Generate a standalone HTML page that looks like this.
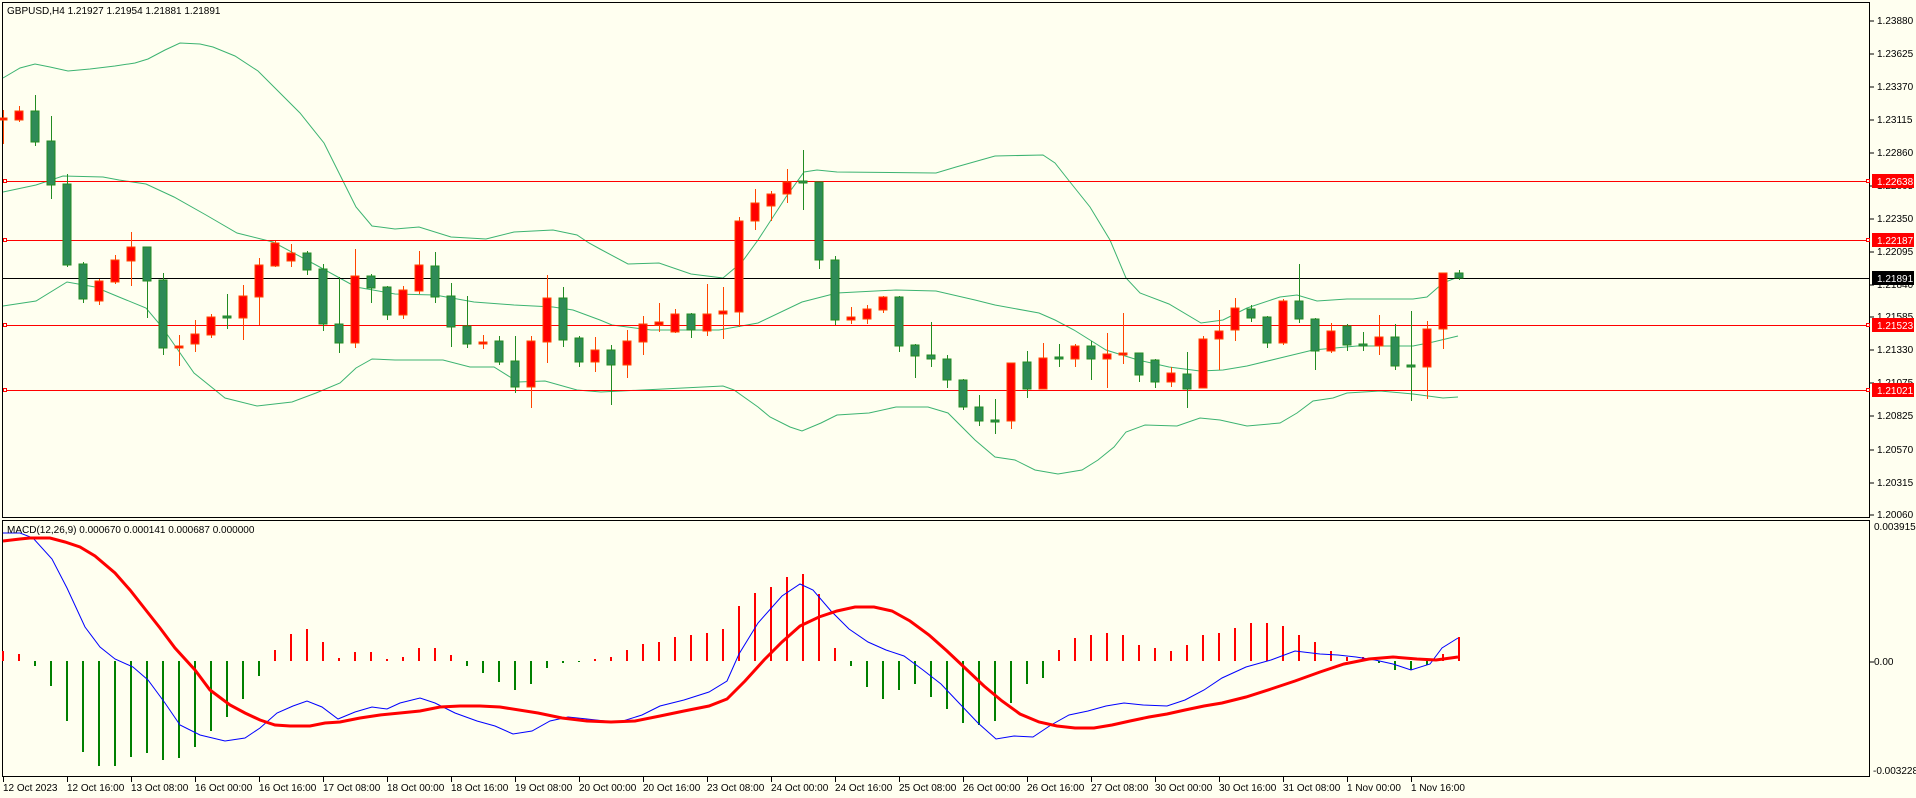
<!DOCTYPE html>
<html><head><meta charset="utf-8"><style>
html,body{margin:0;padding:0;background:#FFFFF0;}
svg{display:block;}
text{font-family:"Liberation Sans",sans-serif;font-size:10px;fill:#000;}
</style></head><body>
<svg width="1916" height="798" viewBox="0 0 1916 798" xmlns="http://www.w3.org/2000/svg">
<rect x="0" y="0" width="1916" height="798" fill="#FFFFF0"/>
<g fill="none" stroke="#000" stroke-width="1" shape-rendering="crispEdges">
<rect x="2.5" y="2.5" width="1867" height="515"/>
<rect x="2.5" y="520.5" width="1867" height="256"/>
</g>
<g fill="none" stroke="#3CB371" stroke-width="1">
<polyline points="3,78 20,68 35,64 50,67 68,71 90,69 115,66 135,63 148,59 165,50 180,43 200,44 213,47 235,56 258,71 277,90 300,113 324,143 344,183 356,207 372,226 395,229 419,227 451,237 486,239 514,232 553,230 577,235 589,243 600,249 628,264 659,263 691,274 723,278 742,262 758,240 786,197 804,172 817,170 837,172 936,173 956,167 995,156 1043,155 1055,163 1070,182 1090,207 1110,240 1126,278 1140,293 1169,304 1201,323 1223,320 1247,308 1280,297 1297,295 1317,301 1347,299 1413,299 1427,297 1443,283 1458,277"/>
<polyline points="3,192 36,185 63,176 103,177 119,180 146,184 174,197 206,215 237,233 273,242 316,265 356,287 395,294 435,295 474,302 514,305 553,307 573,310 600,320 612,325 651,330 719,330 758,323 802,302 837,293 896,290 936,291 975,300 995,305 1039,313 1055,320 1074,330 1106,350 1138,360 1169,367 1200,371 1223,370 1247,366 1280,358 1313,350 1357,346 1413,346 1433,342 1458,336"/>
<polyline points="3,306 36,301 67,282 95,287 119,297 146,308 162,327 194,373 225,398 257,406 292,402 316,393 340,383 356,368 372,359 395,360 443,360 470,367 494,367 510,377 518,382 545,381 577,390 601,392 663,389 723,386 734,390 758,407 770,417 790,427 802,431 821,423 837,415 869,413 896,407 928,407 948,413 975,440 995,457 1015,460 1035,470 1058,474 1082,470 1098,460 1114,447 1126,432 1145,425 1177,426 1200,418 1220,420 1247,426 1280,423 1297,413 1313,401 1333,398 1347,393 1380,391 1413,394 1443,398 1458,397"/>
</g>
<g stroke-width="1" shape-rendering="crispEdges">
<line x1="3" y1="181.5" x2="1869" y2="181.5" stroke="#FF0000"/>
<line x1="3" y1="240.5" x2="1869" y2="240.5" stroke="#FF0000"/>
<line x1="3" y1="325.5" x2="1869" y2="325.5" stroke="#FF0000"/>
<line x1="3" y1="390.5" x2="1869" y2="390.5" stroke="#FF0000"/>
<line x1="3" y1="278.5" x2="1869" y2="278.5" stroke="#000"/>
</g>
<g fill="#FFFFF0" stroke="#FF0000" stroke-width="1" shape-rendering="crispEdges">
<rect x="3.5" y="179.5" width="3" height="3"/><rect x="3.5" y="238.5" width="3" height="3"/><rect x="3.5" y="323.5" width="3" height="3"/><rect x="3.5" y="388.5" width="3" height="3"/>
<rect x="1866.5" y="179.5" width="3" height="3"/><rect x="1866.5" y="238.5" width="3" height="3"/><rect x="1866.5" y="323.5" width="3" height="3"/><rect x="1866.5" y="388.5" width="3" height="3"/>
</g>
<g transform="translate(0.5,0)" stroke-width="1" shape-rendering="crispEdges">
<path stroke="#228B22" d="M35 95V146M51 116V199M67 174V267M83 262V303M147 247V318M163 273V355M227 294V329M307 251V275M323 264V331M339 277V353M371 274V303M387 286V320M435 252V303M451 283V347M467 296V348M499 336V365M515 336V393M563 287V347M579 336V367M611 345V405M691 313V338M803 150V210M819 182V269M835 256V325M899 296V352M915 344V378M931 322V367M947 355V388M963 379V410M979 395V426M995 399V434M1027 351V398M1059 344V367M1091 341V380M1139 353V382M1155 359V388M1187 352V408M1251 305V322M1267 316V348M1299 264V323M1315 318V370M1347 324V351M1363 332V351M1395 324V370M1411 311V401M1459 270V280"/>
<path stroke="#FF4500" d="M3 110V144M19 106V122M99 279V305M115 255V284M131 232V286M179 335V366M195 320V352M211 314V338M243 285V340M259 258V325M275 241V267M291 244V267M355 249V348M403 286V319M419 251V294M483 335V349M531 336V408M547 275V363M595 337V372M627 330V378M643 316V355M659 303V332M675 309V333M707 284V336M723 287V339M739 217V327M755 189V230M771 191V221M787 169V203M851 307V324M867 305V324M883 296V313M1011 363V429M1043 343V389M1075 344V367M1107 333V388M1123 313V364M1171 367V387M1203 336V388M1219 310V370M1235 298V341M1283 299V345M1331 323V353M1379 315V355M1427 321V399M1443 273V349"/>
</g>
<g fill="#2E8B57" stroke="#228B22" stroke-width="1" shape-rendering="crispEdges">
<rect x="31" y="111" width="8" height="31"/><rect x="47" y="141" width="8" height="44"/><rect x="63" y="184" width="8" height="81"/><rect x="79" y="264" width="8" height="35"/><rect x="143" y="247" width="8" height="34"/><rect x="159" y="280" width="8" height="68"/><rect x="223" y="316" width="8" height="2"/><rect x="303" y="253" width="8" height="17"/><rect x="319" y="269" width="8" height="55"/><rect x="335" y="324" width="8" height="19"/><rect x="367" y="276" width="8" height="12"/><rect x="383" y="287" width="8" height="28"/><rect x="431" y="266" width="8" height="31"/><rect x="447" y="296" width="8" height="31"/><rect x="463" y="326" width="8" height="18"/><rect x="495" y="341" width="8" height="21"/><rect x="511" y="361" width="8" height="26"/><rect x="559" y="298" width="8" height="42"/><rect x="575" y="338" width="8" height="24"/><rect x="607" y="350" width="8" height="15"/><rect x="687" y="314" width="8" height="16"/><rect x="799" y="181" width="8" height="2"/><rect x="815" y="182" width="8" height="78"/><rect x="831" y="260" width="8" height="60"/><rect x="895" y="297" width="8" height="49"/><rect x="911" y="345" width="8" height="11"/><rect x="927" y="355" width="8" height="4"/><rect x="943" y="359" width="8" height="21"/><rect x="959" y="380" width="8" height="27"/><rect x="975" y="407" width="8" height="14"/><rect x="991" y="420" width="8" height="2"/><rect x="1023" y="362" width="8" height="27"/><rect x="1055" y="357" width="8" height="2"/><rect x="1087" y="346" width="8" height="13"/><rect x="1135" y="353" width="8" height="22"/><rect x="1151" y="360" width="8" height="22"/><rect x="1183" y="374" width="8" height="15"/><rect x="1247" y="309" width="8" height="9"/><rect x="1263" y="317" width="8" height="26"/><rect x="1295" y="301" width="8" height="18"/><rect x="1311" y="319" width="8" height="32"/><rect x="1343" y="326" width="8" height="19"/><rect x="1359" y="344" width="8" height="2"/><rect x="1391" y="337" width="8" height="29"/><rect x="1407" y="365" width="8" height="2"/><rect x="1455" y="273" width="8" height="5"/>
</g>
<g fill="#FF0000" stroke="#FF4500" stroke-width="1" shape-rendering="crispEdges">
<rect x="-1" y="118" width="8" height="2"/><rect x="15" y="111" width="8" height="9"/><rect x="95" y="281" width="8" height="20"/><rect x="111" y="260" width="8" height="22"/><rect x="127" y="247" width="8" height="14"/><rect x="175" y="346" width="8" height="2"/><rect x="191" y="334" width="8" height="10"/><rect x="207" y="317" width="8" height="18"/><rect x="239" y="296" width="8" height="22"/><rect x="255" y="265" width="8" height="32"/><rect x="271" y="243" width="8" height="23"/><rect x="287" y="253" width="8" height="8"/><rect x="351" y="276" width="8" height="67"/><rect x="399" y="290" width="8" height="25"/><rect x="415" y="265" width="8" height="26"/><rect x="479" y="342" width="8" height="2"/><rect x="527" y="341" width="8" height="46"/><rect x="543" y="298" width="8" height="44"/><rect x="591" y="350" width="8" height="12"/><rect x="623" y="341" width="8" height="24"/><rect x="639" y="324" width="8" height="18"/><rect x="655" y="322" width="8" height="3"/><rect x="671" y="314" width="8" height="18"/><rect x="703" y="314" width="8" height="17"/><rect x="719" y="311" width="8" height="3"/><rect x="735" y="221" width="8" height="91"/><rect x="751" y="203" width="8" height="18"/><rect x="767" y="194" width="8" height="12"/><rect x="783" y="182" width="8" height="12"/><rect x="847" y="317" width="8" height="3"/><rect x="863" y="309" width="8" height="10"/><rect x="879" y="297" width="8" height="13"/><rect x="1007" y="363" width="8" height="58"/><rect x="1039" y="358" width="8" height="31"/><rect x="1071" y="346" width="8" height="13"/><rect x="1103" y="354" width="8" height="5"/><rect x="1119" y="353" width="8" height="2"/><rect x="1167" y="373" width="8" height="9"/><rect x="1199" y="339" width="8" height="49"/><rect x="1215" y="331" width="8" height="8"/><rect x="1231" y="308" width="8" height="22"/><rect x="1279" y="301" width="8" height="42"/><rect x="1327" y="331" width="8" height="20"/><rect x="1375" y="337" width="8" height="9"/><rect x="1423" y="329" width="8" height="38"/><rect x="1439" y="273" width="8" height="56"/>
</g>
<g stroke-width="2" shape-rendering="crispEdges">
<path stroke="#FF0000" d="M3 661V651M19 661V654M275 661V650M291 661V634M307 661V629M323 661V642M339 661V658M355 661V652M371 661V652M387 661V659M403 661V657M419 661V648M435 661V648M451 661V655M595 661V659M611 661V657M627 661V650M643 661V644M659 661V642M675 661V637M691 661V635M707 661V633M723 661V629M739 661V606M755 661V593M771 661V587M787 661V577M803 661V574M819 661V594M835 661V648M1059 661V650M1075 661V638M1091 661V635M1107 661V633M1123 661V635M1139 661V645M1155 661V648M1171 661V651M1187 661V645M1203 661V635M1219 661V633M1235 661V628M1251 661V623M1267 661V623M1283 661V626M1299 661V635M1315 661V642M1331 661V651M1347 661V657M1363 661V657M1443 661V654M1459 661V637"/>
<path stroke="#008000" d="M35 661V666M51 661V686M67 661V721M83 661V752M99 661V766M115 661V766M131 661V757M147 661V753M163 661V760M179 661V758M195 661V747M211 661V731M227 661V717M243 661V699M259 661V676M467 661V666M483 661V673M499 661V682M515 661V690M531 661V684M547 661V668M563 661V663M579 661V662M851 661V666M867 661V687M883 661V699M899 661V690M915 661V684M931 661V697M947 661V709M963 661V723M979 661V725M995 661V721M1011 661V703M1027 661V684M1043 661V678M1379 661V663M1395 661V670M1411 661V670M1427 661V665"/>
</g>
<polyline fill="none" stroke="#0000FF" stroke-width="1" points="3,533 20,533 33,538 52,559 67,588 85,627 100,647 115,659 133,667 148,680 165,703 180,725 200,735 225,741 245,738 260,728 277,713 293,706 307,701 322,707 338,719 355,712 372,707 387,709 400,703 420,698 435,703 455,713 477,721 495,726 513,734 532,731 550,721 568,717 587,719 605,721 623,721 642,715 660,706 684,700 709,692 727,681 739,654 758,623 782,596 800,584 813,590 831,611 849,629 868,642 886,650 904,656 923,670 941,684 959,703 978,723 996,739 1014,736 1033,737 1051,725 1069,715 1088,711 1106,706 1124,703 1143,705 1167,706 1185,700 1204,690 1222,678 1246,667 1271,660 1295,651 1320,654 1338,655 1356,657 1375,660 1393,664 1411,670 1430,664 1442,648 1458,638"/>
<polyline fill="none" stroke="#FF0000" stroke-width="3" points="3,541 20,539 30,538 50,538 65,542 80,547 95,556 115,573 130,590 145,609 160,628 175,648 195,670 210,690 230,705 245,713 260,720 275,725 290,726 310,726 325,723 340,722 360,718 380,715 400,713 420,711 440,707 460,706 480,706 500,707 538,713 562,718 587,721 611,722 635,721 660,716 684,711 709,706 727,699 745,681 764,660 782,642 800,626 819,617 837,611 855,607 874,607 892,611 910,621 929,635 947,651 965,668 984,686 1002,701 1020,714 1039,722 1057,726 1075,728 1094,728 1112,725 1130,721 1149,717 1167,714 1185,710 1204,706 1222,703 1246,697 1271,689 1295,681 1320,672 1344,664 1369,659 1393,657 1417,659 1436,660 1458,657"/>
<g stroke="#000" stroke-width="1" shape-rendering="crispEdges">
<path d="M1870 21H1874M1870 54H1874M1870 87H1874M1870 120H1874M1870 153H1874M1870 186H1874M1870 219H1874M1870 252H1874M1870 285H1874M1870 317H1874M1870 350H1874M1870 383H1874M1870 416H1874M1870 450H1874M1870 483H1874M1870 515H1874M1870 662H1874"/>
<path d="M3.5 777V782M67.5 777V782M131.5 777V782M195.5 777V782M259.5 777V782M323.5 777V782M387.5 777V782M451.5 777V782M515.5 777V782M579.5 777V782M643.5 777V782M707.5 777V782M771.5 777V782M835.5 777V782M899.5 777V782M963.5 777V782M1027.5 777V782M1091.5 777V782M1155.5 777V782M1219.5 777V782M1283.5 777V782M1347.5 777V782M1411.5 777V782"/>
</g>
<g>
<text x="1877" y="24">1.23880</text>
<text x="1877" y="57">1.23625</text>
<text x="1877" y="90">1.23370</text>
<text x="1877" y="123">1.23115</text>
<text x="1877" y="156">1.22860</text>
<text x="1877" y="189">1.22605</text>
<text x="1877" y="222">1.22350</text>
<text x="1877" y="255">1.22095</text>
<text x="1877" y="288">1.21840</text>
<text x="1877" y="320">1.21585</text>
<text x="1877" y="353">1.21330</text>
<text x="1877" y="386">1.21075</text>
<text x="1877" y="419">1.20825</text>
<text x="1877" y="453">1.20570</text>
<text x="1877" y="486">1.20315</text>
<text x="1877" y="518">1.20060</text>
<text x="1874" y="530">0.003915</text>
<text x="1874" y="665">0.00</text>
<text x="1873" y="774">-0.003228</text>
</g>
<g shape-rendering="crispEdges">
<rect x="1872" y="174" width="42" height="14" fill="#FF0000"/>
<rect x="1872" y="233" width="42" height="14" fill="#FF0000"/>
<rect x="1872" y="271" width="42" height="14" fill="#000"/>
<rect x="1872" y="318" width="42" height="14" fill="#FF0000"/>
<rect x="1872" y="383" width="42" height="14" fill="#FF0000"/>
</g>
<g>
<text x="1877" y="185" style="fill:#fff">1.22638</text>
<text x="1877" y="244" style="fill:#fff">1.22187</text>
<text x="1877" y="282" style="fill:#fff">1.21891</text>
<text x="1877" y="329" style="fill:#fff">1.21523</text>
<text x="1877" y="394" style="fill:#fff">1.21021</text>
</g>
<g>
<text x="3" y="791">12 Oct 2023</text>
<text x="67" y="791">12 Oct 16:00</text>
<text x="131" y="791">13 Oct 08:00</text>
<text x="195" y="791">16 Oct 00:00</text>
<text x="259" y="791">16 Oct 16:00</text>
<text x="323" y="791">17 Oct 08:00</text>
<text x="387" y="791">18 Oct 00:00</text>
<text x="451" y="791">18 Oct 16:00</text>
<text x="515" y="791">19 Oct 08:00</text>
<text x="579" y="791">20 Oct 00:00</text>
<text x="643" y="791">20 Oct 16:00</text>
<text x="707" y="791">23 Oct 08:00</text>
<text x="771" y="791">24 Oct 00:00</text>
<text x="835" y="791">24 Oct 16:00</text>
<text x="899" y="791">25 Oct 08:00</text>
<text x="963" y="791">26 Oct 00:00</text>
<text x="1027" y="791">26 Oct 16:00</text>
<text x="1091" y="791">27 Oct 08:00</text>
<text x="1155" y="791">30 Oct 00:00</text>
<text x="1219" y="791">30 Oct 16:00</text>
<text x="1283" y="791">31 Oct 08:00</text>
<text x="1347" y="791">1 Nov 00:00</text>
<text x="1411" y="791">1 Nov 16:00</text>
</g>
<text x="7" y="14">GBPUSD,H4  1.21927 1.21954 1.21881 1.21891</text>
<text x="7" y="533">MACD(12,26,9) 0.000670 0.000141 0.000687 0.000000</text>
</svg>
</body></html>
